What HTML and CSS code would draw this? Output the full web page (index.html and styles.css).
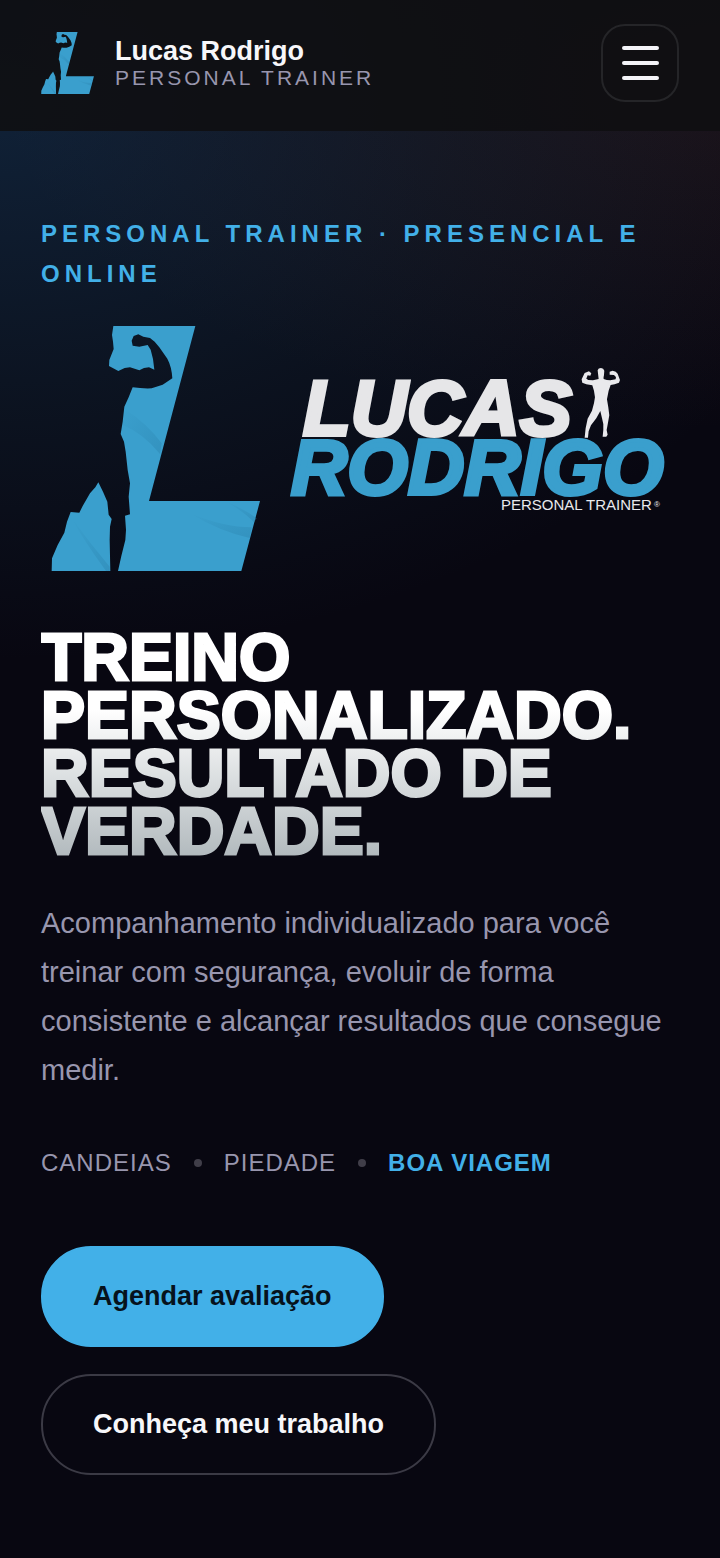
FILE: index.html
```html
<!DOCTYPE html>
<html lang="pt-BR">
<head>
<meta charset="utf-8">
<meta name="viewport" content="width=device-width, initial-scale=1">
<title>Lucas Rodrigo · Personal Trainer</title>
<link rel="stylesheet" href="styles.css">
</head>
<body>
<svg class="defs" aria-hidden="true">
  <defs>
    <linearGradient id="fold" x1="0" y1="0" x2="1" y2="1">
      <stop offset="0" stop-color="#2b83ae" stop-opacity="0"/>
      <stop offset="1" stop-color="#2b83ae" stop-opacity=".45"/>
    </linearGradient>
    <symbol id="mark" viewBox="63 48 627 735">
      <path fill="#3a9fcd" d="M250 48H496L357 573H690L634 783H264L274 738 286 690 288 660 285 617 300 613 296 560 300 520 293 480 287 425 282 395 272 372 278 335 283 290 296 262 308 232Q335 236 365 235L398 224 427 205Q425 170 412 146L388 112 374 95 360 84 340 80 325 73 311 78 305 92 308 107 328 110 353 105 362 119 369 147 373 179 357 172 342 174 328 181 300 172 284 174 265 183 237 168 238 150 251 117 249 95 246 75Z"/>
      <path fill="#3a9fcd" d="M205 517 219 545 232 575 236 614 245 627 240 650 239 690 241 783H65L66 745 83 705 103 668 111 635 122 606 148 608 158 588 180 550 196 532Z"/>
      <path fill="url(#fold)" d="M285 298Q350 340 395 400L390 432Q340 370 278 345Z"/>
      <path fill="url(#fold)" d="M585 574Q640 595 680 625L672 637Q640 603 585 574Z"/>
      <path fill="url(#fold)" d="M480 610Q580 652 665 652L659 684Q570 665 480 610Z"/>
      <path fill="url(#fold)" d="M125 625Q180 700 239 770V783H228Q160 690 125 625Z"/>
    </symbol>
  </defs>
</svg>

<header class="topbar">
  <a class="brand" href="#inicio">
    <svg class="brand-mark" aria-hidden="true"><use href="#mark"/></svg>
    <span class="brand-text">
      <span class="brand-name">Lucas Rodrigo</span>
      <span class="brand-role">PERSONAL TRAINER</span>
    </span>
  </a>
  <button class="menu" type="button" aria-label="Abrir menu">
    <span class="menu-bar"></span><span class="menu-bar"></span><span class="menu-bar"></span>
  </button>
</header>

<main class="hero" id="inicio">
  <p class="eyebrow">PERSONAL TRAINER · PRESENCIAL E ONLINE</p>
  <svg class="logo" viewBox="0 0 638 264" role="img" aria-label="Lucas Rodrigo Personal Trainer">
    <use href="#mark" x="10" y="10" width="209" height="245"/>
    <text class="logo-first" x="262" y="119">LUCAS</text>
    <text class="logo-last" x="250" y="178">RODRIGO</text>
    <text class="logo-role" x="460" y="194">PERSONAL TRAINER</text>
    <text class="logo-reg" x="613" y="191">®</text>
    <path fill="#e9e9ec" transform="translate(239 34) scale(.3333)" d="M953 61Q955 54 963 54 971 54 973 62L972 76Q970 82 971 87 980 91 991 91L1007 88 1008 81 1002 75 989 74 989 65 998 62Q1009 63 1013 71L1020 90 1017 98 1004 103 992 105 986 122 981 148 985 172 988 196 983 224 980 240 983 254 979 260H968L970 240 970 222 966 204 961 183 949 205 933 226 926 244 924 263H914L917 235 923 206 936 182 942 160 945 142 942 122 937 106 919 103 907 98 905 88 914 69 927 64 934 70 931 77 923 76 919 86 925 90 939 91 956 87Z"/>
  </svg>
  <h1 class="title">TREINO PERSONALIZADO. RESULTADO DE VERDADE.</h1>
  <p class="lead">Acompanhamento individualizado para você treinar com segurança, evoluir de forma consistente e alcançar resultados que consegue medir.</p>
  <ul class="places">
    <li class="place">CANDEIAS</li>
    <li class="place">PIEDADE</li>
    <li class="place place-active">BOA VIAGEM</li>
  </ul>
  <div class="actions">
    <a class="btn btn-primary" href="#agendar">Agendar avaliação</a>
    <a class="btn btn-outline" href="#trabalho">Conheça meu trabalho</a>
  </div>
</main>
</body>
</html>
```
FILE: styles.css
```css
* { box-sizing: border-box; }

body {
  margin: 0;
  min-height: 100vh;
  color: #f7f7fa;
  font-family: "Liberation Sans", Arial, sans-serif;
  background:
    radial-gradient(ellipse 120% 560px at 0 100px, rgba(35, 95, 145, .3), rgba(30, 80, 110, .16) 55%, rgba(30, 80, 110, 0)),
    radial-gradient(ellipse 100% 340px at 100% 90px, rgba(130, 65, 50, .16), rgba(130, 65, 50, 0)),
    #080711;
}

a { color: inherit; text-decoration: none; }

.defs { position: absolute; width: 0; height: 0; }

.topbar {
  display: flex;
  align-items: center;
  justify-content: space-between;
  padding: 24px 41px 29px;
  background: rgba(15, 15, 17, .88);
}

.brand { display: flex; align-items: center; gap: 21px; }
.brand-mark { width: 53px; height: 62px; }
.brand-text { display: flex; flex-direction: column; }
.brand-name { font-size: 27px; font-weight: 700; line-height: 30px; }
.brand-role { font-size: 21px; line-height: 24px; letter-spacing: 3px; color: #9896ae; }

.menu {
  display: flex;
  flex-direction: column;
  align-items: center;
  justify-content: center;
  gap: 11px;
  width: 78px;
  height: 78px;
  padding: 0;
  border: 2px solid #252528;
  border-radius: 24px;
  background: transparent;
}
.menu-bar { width: 37px; height: 4px; border-radius: 2px; background: #f4f4f8; }

.hero { padding: 83px 41px; }

.eyebrow {
  margin: 0 0 22px;
  font-size: 24px;
  font-weight: 700;
  line-height: 40px;
  letter-spacing: 5px;
  color: #42b0e8;
}

.logo { display: block; width: 100%; height: auto; }
.logo-first, .logo-last {
  font-size: 78px;
  font-weight: 700;
  font-style: italic;
  stroke-width: 4px;
}
.logo-first { fill: #e6e6e8; stroke: #e6e6e8; }
.logo-last { fill: #3a9fcd; stroke: #3a9fcd; }
.logo-role { font-size: 15px; fill: #e9e9ec; }
.logo-reg { font-size: 8px; fill: #e9e9ec; }

.title {
  margin: 48px 0 0;
  font-size: 66px;
  font-weight: 700;
  line-height: 58px;
  color: transparent;
  -webkit-text-stroke: 3px transparent;
  background: linear-gradient(180deg, #fff 35%, #b0b8bc);
  background-clip: text;
  -webkit-background-clip: text;
}

.lead {
  margin: 39px 0 0;
  font-size: 29px;
  line-height: 49px;
  color: #9896ae;
}

.places {
  display: flex;
  flex-wrap: wrap;
  gap: 22px;
  margin: 48px 0 0;
  padding: 0;
  list-style: none;
  font-size: 24px;
  line-height: 40px;
  letter-spacing: 1px;
  color: #9896ae;
}
.place { display: flex; align-items: center; gap: 22px; }
.place + .place::before {
  content: "";
  width: 8px;
  height: 8px;
  border-radius: 50%;
  background: #403e49;
}
.place-active { font-weight: 700; color: #42b0e8; }

.actions {
  display: flex;
  flex-direction: column;
  align-items: flex-start;
  gap: 27px;
  margin-top: 63px;
}
.btn {
  padding: 33px 50px;
  border: 2px solid #3b3a45;
  border-radius: 50px;
  font-size: 27px;
  font-weight: 700;
  line-height: 31px;
}
.btn-primary { border-color: #42b0e8; background: #42b0e8; color: #06121c; }
```
